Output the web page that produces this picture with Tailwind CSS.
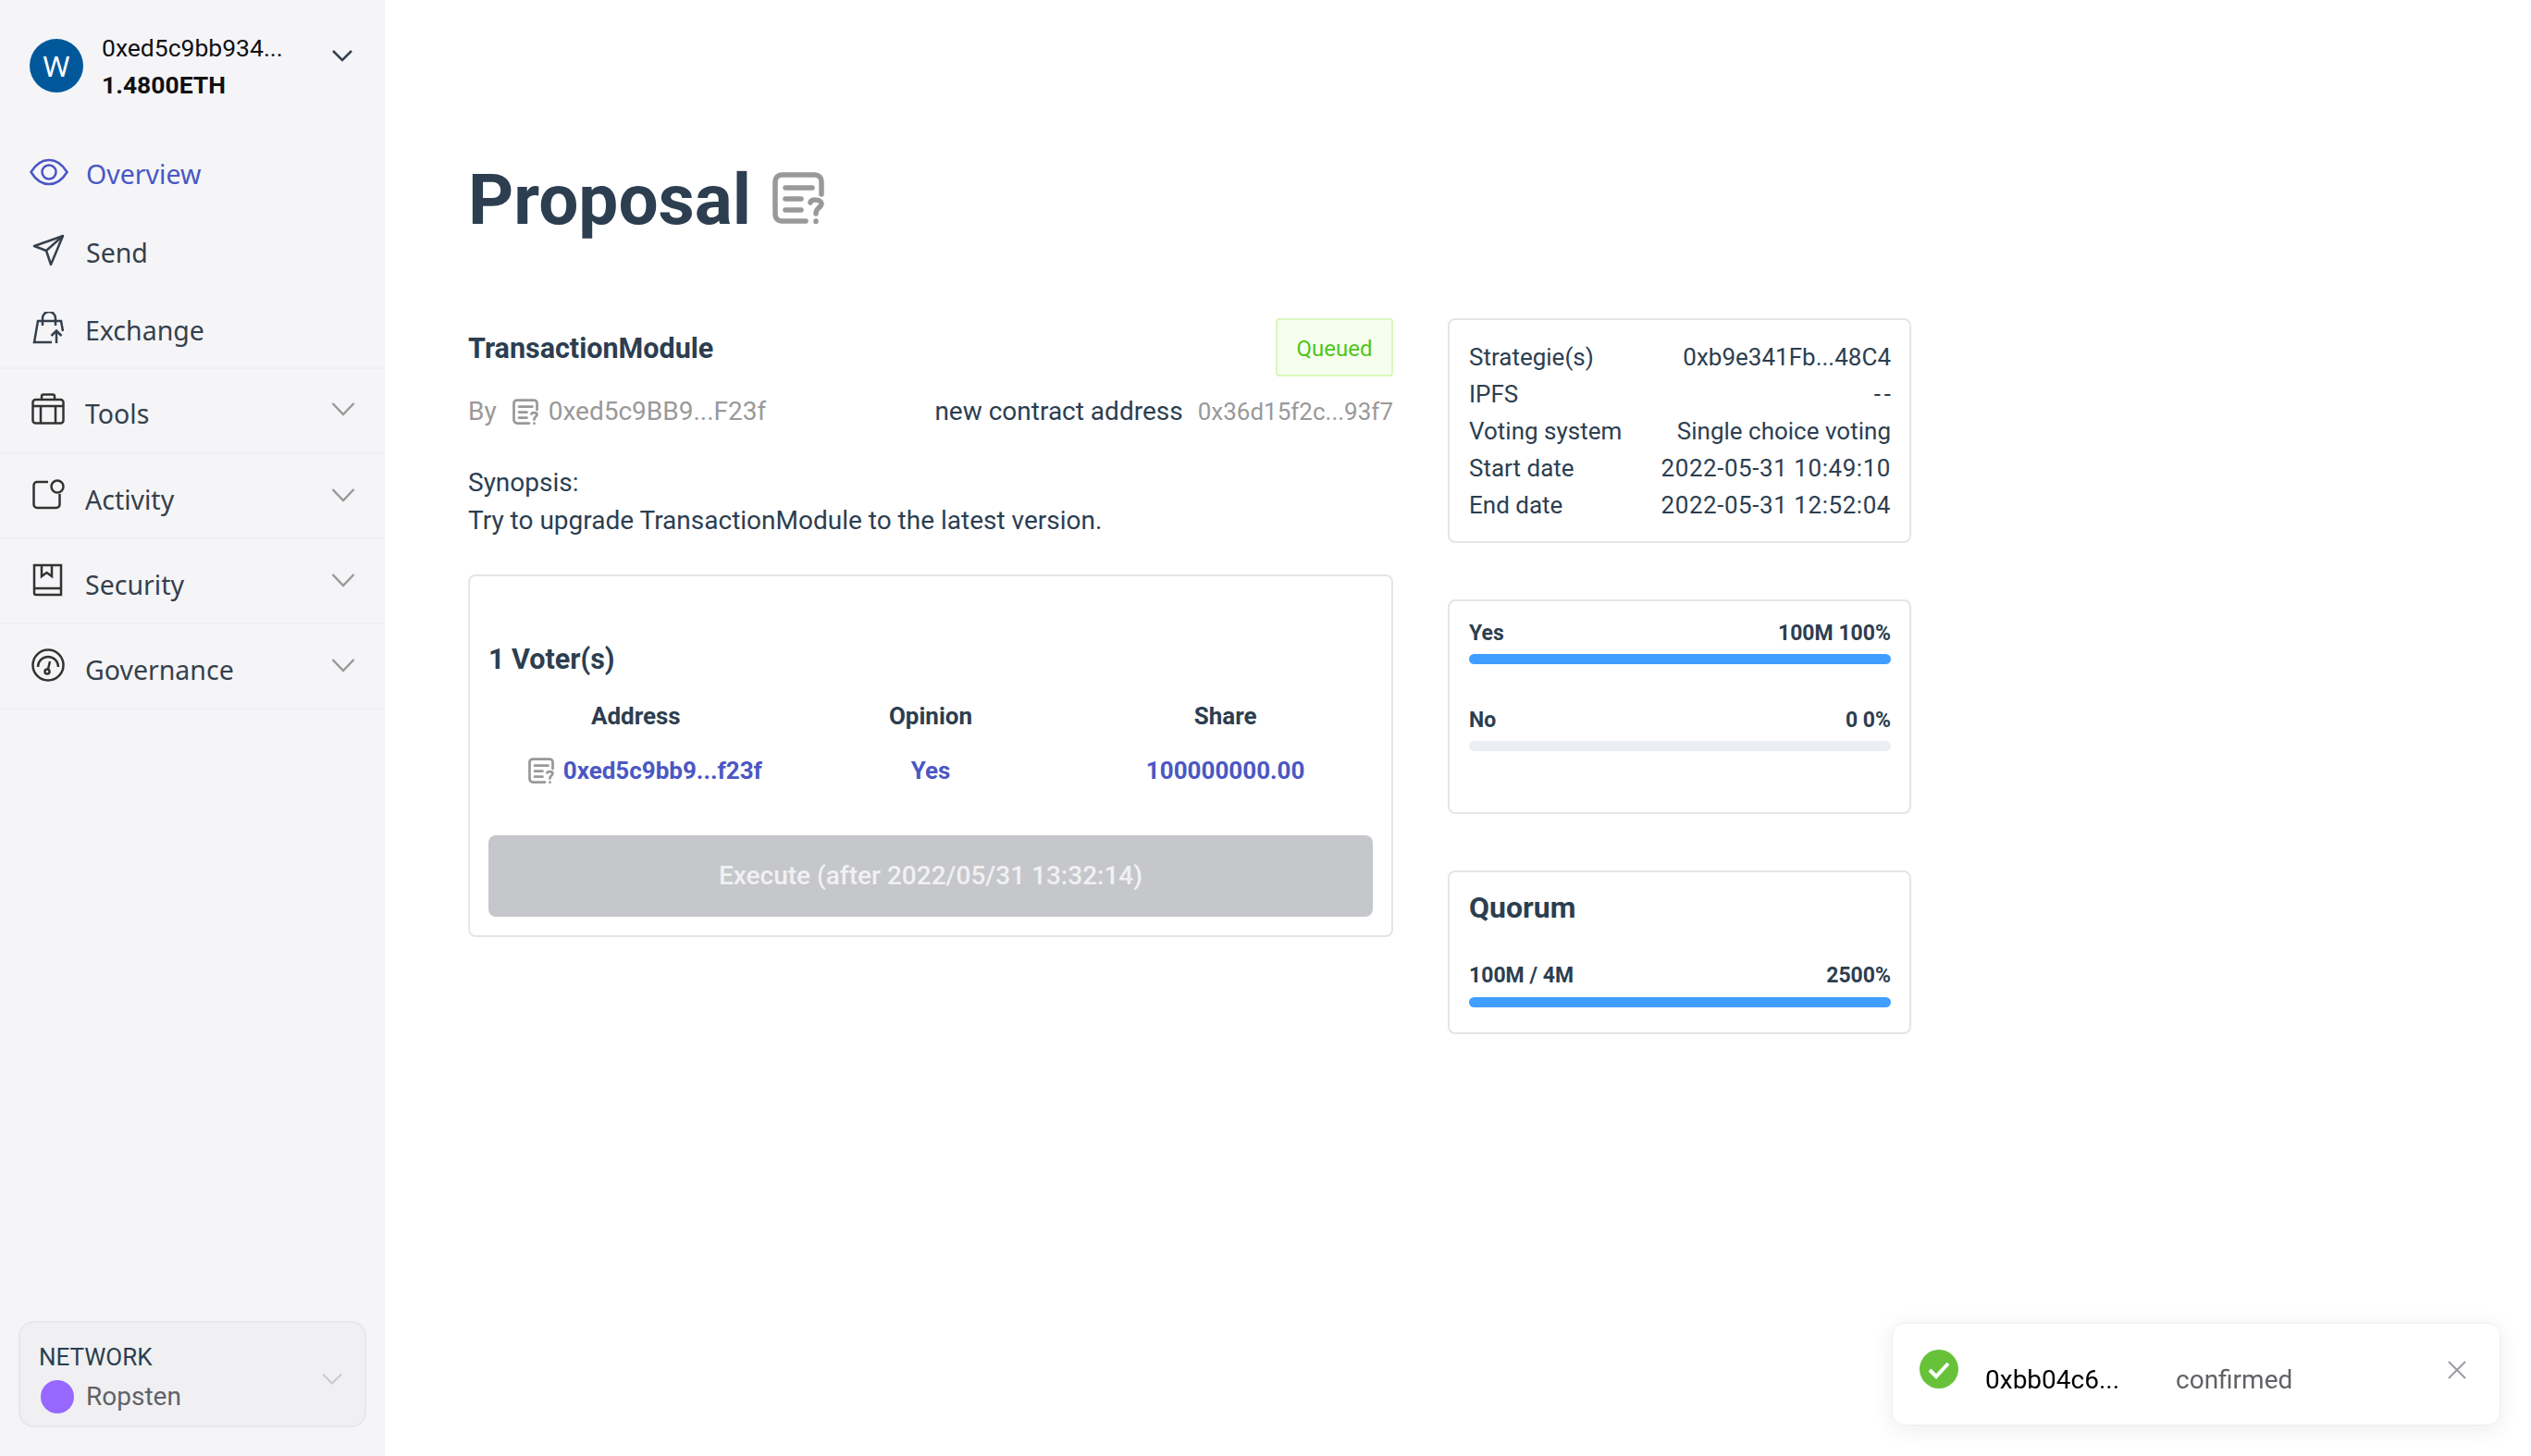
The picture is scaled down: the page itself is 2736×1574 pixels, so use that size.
<!DOCTYPE html>
<html lang="en">
<head>
    <meta charset="UTF-8">
    <title>Proposal</title>
    <script src="https://cdn.jsdelivr.net/npm/@tailwindcss/browser@4"></script>
</head>
<body class="bg-white h-screen overflow-hidden font-['Roboto',sans-serif] text-[#2c3e50]">
<div class="flex h-screen">
    <!-- sidebar -->
    <aside class="w-[416px] shrink-0 h-full bg-[#f5f5f8] flex flex-col font-['Noto_Sans',sans-serif] text-[28.5px] text-[#35404c]">
        <div class="flex items-center h-[146px] pl-[32px] pr-[32px] pb-[4px]">
            <div class="w-[58px] h-[58px] rounded-full bg-[#00589b] text-white flex items-center justify-center text-[31px]">W</div>
            <div class="ml-[20px] mt-[2px] font-['Roboto',sans-serif] text-[26.5px] leading-[40px] text-[#111]">
                <div>0xed5c9bb934...</div>
                <div class="font-bold">1.4800ETH</div>
            </div>
            <svg class="ml-auto mb-[22px] mr-[2px]" width="24" height="14" viewBox="0 0 24 14" fill="none" stroke="#35404c" stroke-width="2.5"><path d="M2 2l10 10L22 2"/></svg>
        </div>
        <div class="h-[85px] flex items-center pl-[32px] text-[#4a57c4]">
            <svg class="mb-[6px]" width="42" height="30" viewBox="0 0 42 30" fill="none" stroke="#4a57c4" stroke-width="2.5"><path d="M1.5 15C7 6 13 2 21 2s14 4 19.500 13C35 24 29 28 21 28S7 24 1.500 15z"/><circle cx="21" cy="15" r="7.500"/></svg>
            <span class="ml-[19px]">Overview</span>
        </div>
        <div class="h-[85px] flex items-center pl-[32px]">
            <svg class="mb-[6px] ml-[3px]" width="36" height="36" viewBox="0 0 36 36" fill="none" stroke="#35404c" stroke-width="2.500" stroke-linejoin="round"><path d="M2 13L33 2 20 33l-5-15z"/><path d="M15 18L33 2"/></svg>
            <span class="ml-[22px]">Send</span>
        </div>
        <div class="h-[83px] flex items-center pl-[32px] pt-[2px] border-b-2 border-[#f0f0f2]">
            <svg class="mb-[6px] ml-[3px]" width="34" height="36" viewBox="0 0 34 36" fill="none" stroke="#35404c" stroke-width="2.500"><path d="M21 33H2L6 10h25l2 11"/><path d="M11 10V7a6 6 0 0 1 14 0v3M11 10v5M25 10v5"/><path d="M26 34V21M20.500 26l5.500-5.500 5.500 5.500"/></svg>
            <span class="ml-[23px]">Exchange</span>
        </div>
        <div class="h-[92px] flex items-center pl-[34px] pr-[32px] pt-[6px] border-b-2 border-[#f0f0f2]">
            <svg class="mb-[10px]" width="36" height="34" viewBox="0 0 36 34" fill="none" stroke="#333" stroke-width="2.500"><rect x="1.500" y="7" width="33" height="25.500" rx="3"/><path d="M11 7V3.500a2 2 0 0 1 2-2h10a2 2 0 0 1 2 2V7M1.500 14h33M10 14v18M26 14v18"/></svg>
            <span class="ml-[22px]">Tools</span>
            <svg class="ml-auto mb-[10px]" width="26" height="16" viewBox="0 0 26 16" fill="none" stroke="#999" stroke-width="2.500"><path d="M1.500 2L13 14 24.500 2"/></svg>
        </div>
        <div class="h-[92px] flex items-center pl-[34px] pr-[32px] pt-[8px] border-b-2 border-[#f0f0f2]">
            <svg class="mb-[10px]" width="36" height="34" viewBox="0 0 36 34" fill="none" stroke="#333" stroke-width="2.500"><path d="M18 3H6a3.500 3.500 0 0 0-3.500 3.500v21A3.500 3.500 0 0 0 6 31h21a3.500 3.500 0 0 0 3.500-3.500V16"/><circle cx="28" cy="8" r="6.500"/></svg>
            <span class="ml-[22px]">Activity</span>
            <svg class="ml-auto mb-[10px]" width="26" height="16" viewBox="0 0 26 16" fill="none" stroke="#999" stroke-width="2.500"><path d="M1.500 2L13 14 24.500 2"/></svg>
        </div>
        <div class="h-[92px] flex items-center pl-[34px] pr-[32px] pt-[8px] border-b-2 border-[#f0f0f2]">
            <svg class="mb-[10px]" width="36" height="36" viewBox="0 0 36 36" fill="none" stroke="#333" stroke-width="2.500"><path d="M3 2h29v32H5a2 2 0 0 1-2-2z"/><path d="M3 27h29"/><path d="M11 2v12l5.500-4 5.500 4V2"/></svg>
            <span class="ml-[22px]">Security</span>
            <svg class="ml-auto mb-[10px]" width="26" height="16" viewBox="0 0 26 16" fill="none" stroke="#999" stroke-width="2.500"><path d="M1.500 2L13 14 24.500 2"/></svg>
        </div>
        <div class="h-[92px] flex items-center pl-[34px] pr-[32px] pt-[8px] border-b-2 border-[#f0f0f2]">
            <svg class="mb-[10px]" width="36" height="36" viewBox="0 0 36 36" fill="none" stroke="#333" stroke-width="2.500"><circle cx="18" cy="18" r="16.500"/><path d="M7 20a11 11 0 0 1 22 0"/><circle cx="17" cy="25" r="2.500"/><path d="M18 22l2-8"/></svg>
            <span class="ml-[22px]">Governance</span>
            <svg class="ml-auto mb-[10px]" width="26" height="16" viewBox="0 0 26 16" fill="none" stroke="#999" stroke-width="2.500"><path d="M1.500 2L13 14 24.500 2"/></svg>
        </div>
        <div class="mt-auto mx-[20px] mb-[31px] h-[115px] rounded-[16px] border-2 border-[#e8e8ea] bg-[#f0f0f2] flex items-center pl-[20px] pr-[24px] font-['Roboto',sans-serif]">
            <div class="mt-[5px]">
                <div class="text-[26px] leading-[38px] text-[#2c3e50]">NETWORK</div>
                <div class="flex items-center text-[28px] leading-[38px] text-[#606266] mt-[5px]">
                    <span class="w-[36px] h-[36px] rounded-full bg-[#9668ff] ml-[2px]"></span>
                    <span class="ml-[13px]">Ropsten</span>
                </div>
            </div>
            <svg class="ml-auto mt-[10px]" width="22" height="13" viewBox="0 0 22 13" fill="none" stroke="#c5cad3" stroke-width="2"><path d="M1 1.500l10 10 10-10"/></svg>
        </div>
    </aside>

    <!-- main -->
    <main class="flex-1 pl-[90px]">
        <div class="flex items-center h-[140px] mt-[146px]">
            <h1 class="text-[76.5px] leading-none font-bold text-[#2c3e50]">Proposal</h1>
            <svg class="ml-[23px] mt-[-4px]" width="56" height="56" viewBox="0 0 56 56" fill="none" stroke="#999" stroke-width="5.5" stroke-linecap="round"><path d="M53 24V10a7 7 0 0 0-7-7H10a7 7 0 0 0-7 7v36a7 7 0 0 0 7 7h26"/><path d="M14 17h29M14 29h17M14 41h17"/><path d="M41 33c1-4 11-4 12 1 0 5-6 4-6 11M47 53v.5"/></svg>
        </div>
        <div class="flex mt-[58px]">
            <div class="w-[1000px]">
                <div class="flex items-center justify-between h-[63px]">
                    <span class="text-[30.5px] font-bold pt-[2px]">TransactionModule</span>
                    <span class="w-[127px] h-[63px] pt-[3px] flex items-center justify-center rounded-[4px] border-2 border-[#d9f7be] bg-[#f6ffed] text-[#52c41a] text-[24px]">Queued</span>
                </div>
                <div class="flex items-center justify-between h-[40px] mt-[18px] text-[28px]">
                    <div class="flex items-center text-[#999]">
                        <span>By</span>
                        <svg class="ml-[17px]" width="28" height="28" viewBox="0 0 56 56" fill="none" stroke="#999" stroke-width="5.5" stroke-linecap="round"><path d="M53 24V10a7 7 0 0 0-7-7H10a7 7 0 0 0-7 7v36a7 7 0 0 0 7 7h26"/><path d="M14 17h29M14 29h17M14 41h17"/><path d="M41 33c1-4 11-4 12 1 0 5-6 4-6 11M47 53v.5"/></svg>
                        <span class="ml-[11px]">0xed5c9BB9...F23f</span>
                    </div>
                    <div class="flex items-center">
                        <span>new contract address</span>
                        <span class="ml-[16px] text-[26px] text-[#999]">0x36d15f2c...93f7</span>
                    </div>
                </div>
                <div class="mt-[36px] text-[28px] leading-[41px]">
                    <div>Synopsis:</div>
                    <div>Try to upgrade TransactionModule to the latest version.</div>
                </div>
                <div class="mt-[38px] h-[392px] rounded-[8px] border-2 border-[#e5e5e5] px-[20px] pt-[70px]">
                    <div class="text-[30.5px] leading-[40px] font-bold">1 Voter(s)</div>
                    <div class="grid grid-cols-3 text-center text-[26px] font-bold mt-[21px] leading-[40px]">
                        <div>Address</div>
                        <div>Opinion</div>
                        <div>Share</div>
                    </div>
                    <div class="grid grid-cols-3 text-center text-[26px] font-bold mt-[19px] leading-[40px] text-[#4a57c4]">
                        <div class="flex items-center justify-center pl-[20px]">
                            <svg class="mr-[10px]" width="28" height="28" viewBox="0 0 56 56" fill="none" stroke="#999" stroke-width="5.5" stroke-linecap="round"><path d="M53 24V10a7 7 0 0 0-7-7H10a7 7 0 0 0-7 7v36a7 7 0 0 0 7 7h26"/><path d="M14 17h29M14 29h17M14 41h17"/><path d="M41 33c1-4 11-4 12 1 0 5-6 4-6 11M47 53v.5"/></svg>
                            <span>0xed5c9bb9...f23f</span>
                        </div>
                        <div>Yes</div>
                        <div>100000000.00</div>
                    </div>
                    <div class="mt-[50px] h-[88px] rounded-[8px] bg-[#c6c7cb] text-[#f1f1f2] text-[28px] font-medium flex items-center justify-center">Execute (after 2022/05/31 13:32:14)</div>
                </div>
            </div>
            <div class="w-[501px] ml-[59px]">
                <div class="h-[243px] rounded-[8px] border-2 border-[#e5e5e5] pl-[21px] pr-[20px] pt-[20px] text-[26px] leading-[40px]">
                    <div class="flex justify-between"><span>Strategie(s)</span><span>0xb9e341Fb...48C4</span></div>
                    <div class="flex justify-between"><span>IPFS</span><span class="tracking-[4px] mr-[-4px]">--</span></div>
                    <div class="flex justify-between"><span>Voting system</span><span>Single choice voting</span></div>
                    <div class="flex justify-between"><span>Start date</span><span class="tracking-[0.55px]">2022-05-31 10:49:10</span></div>
                    <div class="flex justify-between"><span>End date</span><span class="tracking-[0.55px]">2022-05-31 12:52:04</span></div>
                </div>
                <div class="mt-[61px] h-[232px] rounded-[8px] border-2 border-[#e5e5e5] pl-[21px] pr-[20px] pt-[19px] text-[23px] font-bold">
                    <div class="flex justify-between leading-[32px]"><span>Yes</span><span>100M 100%</span></div>
                    <div class="h-[11px] rounded-full bg-[#409eff] mt-[6px]"></div>
                    <div class="flex justify-between leading-[32px] mt-[45px]"><span>No</span><span>0 0%</span></div>
                    <div class="h-[11px] rounded-full bg-[#ebeef5] mt-[6px]"></div>
                </div>
                <div class="mt-[61px] h-[177px] rounded-[8px] border-2 border-[#e5e5e5] pl-[21px] pr-[20px] pt-[18px]">
                    <div class="text-[32px] leading-[40px] font-bold">Quorum</div>
                    <div class="flex justify-between text-[23px] font-bold leading-[32px] mt-[38px]"><span>100M / 4M</span><span>2500%</span></div>
                    <div class="h-[11px] rounded-full bg-[#409eff] mt-[7px]"></div>
                </div>
            </div>
        </div>
    </main>
</div>

<!-- toast -->
<div class="fixed left-[2045px] top-[1430px] w-[658px] h-[111px] bg-white rounded-[14px] border border-[#ebeef5] shadow-[0_4px_24px_rgba(0,0,0,0.08)]">
    <svg class="absolute left-[28px] top-[27px]" width="44" height="44" viewBox="0 0 44 44"><circle cx="22" cy="22" r="21" fill="#67c23a"/><path d="M12 23l7 7 13-14" fill="none" stroke="#fff" stroke-width="4"/></svg>
    <span class="absolute left-[100px] top-[43px] text-[28px] leading-[36px] text-black">0xbb04c6...</span>
    <span class="absolute left-[306px] top-[43px] text-[28px] leading-[36px] text-[#606266]">confirmed</span>
    <svg class="absolute left-[599px] top-[39px]" width="22" height="22" viewBox="0 0 22 22" fill="none" stroke="#999ca3" stroke-width="2"><path d="M2 2l18 18M20 2L2 20"/></svg>
</div>
</body>
</html>
